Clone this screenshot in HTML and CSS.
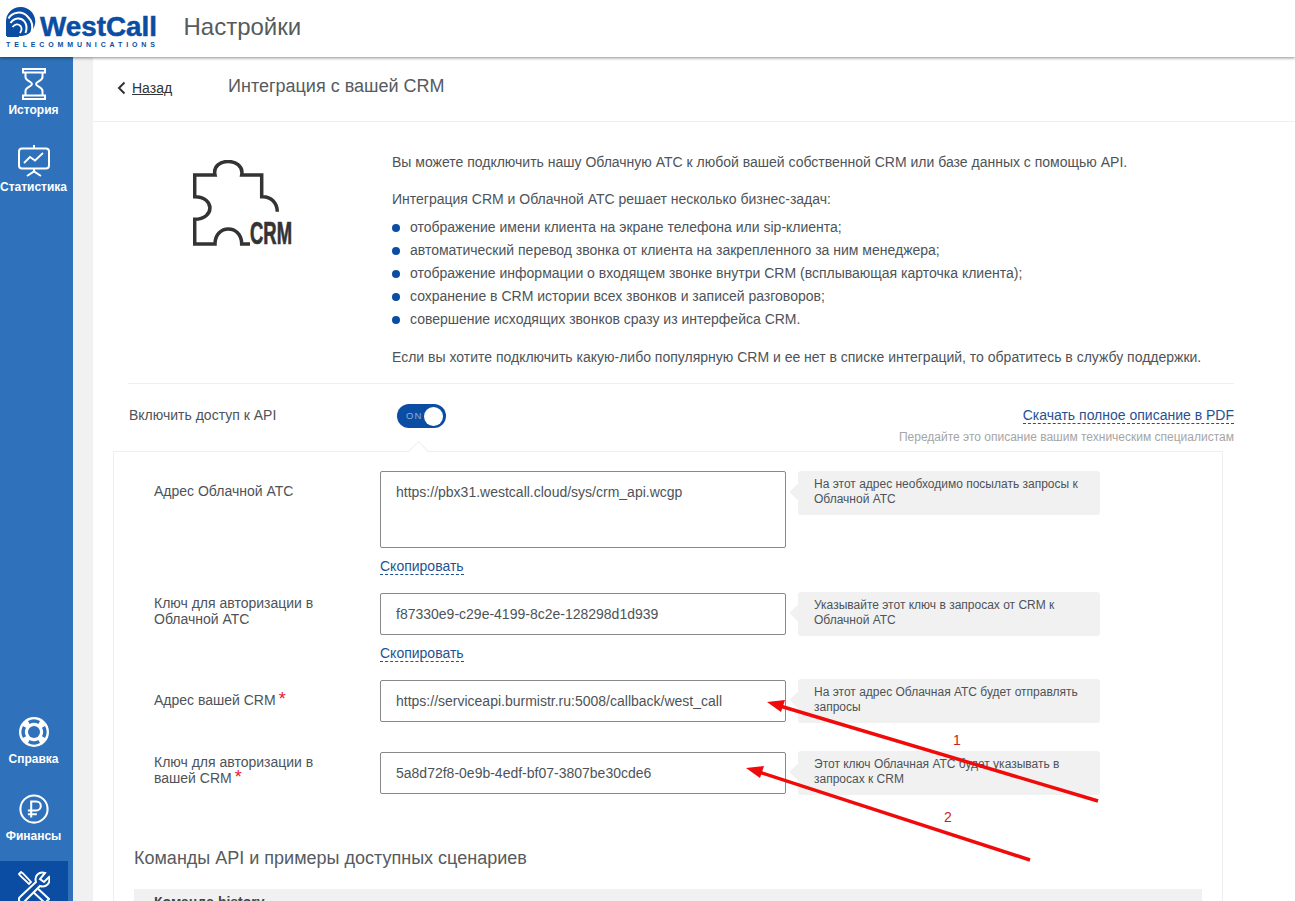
FILE: index.html
```html
<!DOCTYPE html>
<html lang="ru">
<head>
<meta charset="utf-8">
<title>Настройки</title>
<link rel="stylesheet" href="styles.css">
</head>
<body>
<div class="app">
  <header class="topbar">
    <div class="logo">
      <svg class="logo-mark" viewBox="0 0 30 31" width="30" height="31">
        <path d="M14.500 1A14.500 14.500 0 1 1 11 29.500L0 30V15A14.500 14.500 0 0 1 14.500 1Z" fill="#0a4da2"/>
        <path d="M2.500 12.500C6 6 16 4 22 11C26 15 27 21 25.500 26" fill="none" stroke="#fff" stroke-width="2"/>
        <path d="M4.500 17C8 11.500 15 11 18.500 15.500C21 19 21 23 19.500 27" fill="none" stroke="#fff" stroke-width="2"/>
        <path d="M6.500 21C9 18 12 17.500 14.500 20C16 22 15.500 25 14 27" fill="none" stroke="#fff" stroke-width="1.800"/>
        <path d="M1 28L6 24C7 26 9 27 12 27L13 31H1Z" fill="#0a4da2"/>
      </svg>
      <span class="logo-name">WestCall</span>
      <span class="logo-sub">TELECOMMUNICATIONS</span>
    </div>
    <h1 class="page-title">Настройки</h1>
  </header>

  <div class="body-row">
    <nav class="sidebar">
      <div class="nav-group">
        <a class="nav-item">
          <svg viewBox="0 0 24 32" width="24" height="32" class="nav-icon"><path d="M1 1H23V4.500H1ZM1 27.500H23V31H1Z" fill="none" stroke="#fff" stroke-width="2"/><path d="M3.500 5V9C3.500 13 10 13.500 10 16C10 18.500 3.500 19 3.500 23V27M20.500 5V9C20.500 13 14 13.500 14 16C14 18.500 20.500 19 20.500 23V27" stroke="#fff" stroke-width="2" fill="none"/></svg>
          <span>История</span>
        </a>
        <a class="nav-item">
          <svg viewBox="0 0 32 32" width="32" height="32" class="nav-icon"><rect x="1" y="3.500" width="30" height="20" rx="3" fill="none" stroke="#fff" stroke-width="2"/><path d="M16 0V3M16 24V27M9 31L16 26.500L23 31" fill="none" stroke="#fff" stroke-width="2"/><path d="M6 18L12 12L17 15.500L25 8" fill="none" stroke="#fff" stroke-width="1.800"/></svg>
          <span>Статистика</span>
        </a>
      </div>
      <div class="nav-group nav-group-bottom">
        <a class="nav-item">
          <svg viewBox="0 0 30 30" width="30" height="30" class="nav-icon"><circle cx="15" cy="15" r="15" fill="#fff"/><circle cx="15" cy="15" r="6" fill="#2f72bb"/><path d="M9.800 5.500A10.800 10.800 0 0 1 20.200 5.500M24.500 9.800A10.800 10.800 0 0 1 24.500 20.200M20.200 24.500A10.800 10.800 0 0 1 9.800 24.500M5.500 20.200A10.800 10.800 0 0 1 5.500 9.800" fill="none" stroke="#2f72bb" stroke-width="3.500"/></svg>
          <span>Справка</span>
        </a>
        <a class="nav-item">
          <svg viewBox="0 0 32 32" width="30" height="30" class="nav-icon"><circle cx="16" cy="16" r="14.500" fill="none" stroke="#fff" stroke-width="2.200"/><path d="M13 25V8H18.500A4.500 4.500 0 0 1 18.500 17.500H9.500M9.500 21.500H19" fill="none" stroke="#fff" stroke-width="2.200"/></svg>
          <span>Финансы</span>
        </a>
        <a class="nav-item nav-active">
          <svg viewBox="0 0 32 32" width="32" height="32" class="nav-icon"><path d="M1 3L3 1L5 2.500L13 11L11 13L2.500 5Z" fill="none" stroke="#fff" stroke-width="1.800"/><path d="M17 15L31 28L27 32L13 19" fill="none" stroke="#fff" stroke-width="2"/><path d="M27 2C21 0 16 5 18 11L2 26C0 28 1 30 2 31C3 32 5 32 7 30L22 15C28 17 33 12 31 6L26 11L22 8Z" fill="#0a4da2" stroke="#fff" stroke-width="2"/></svg>
          <span>Настройки</span>
        </a>
      </div>
    </nav>

    <main class="gutter">
      <div class="sheet">
        <div class="toolbar">
          <a class="back"><svg viewBox="0 0 9 14" width="9" height="14"><path d="M7.500 1.500L2 7L7.500 12.500" fill="none" stroke="#333" stroke-width="2"/></svg><span class="back-text">Назад</span></a>
          <h2 class="section-title">Интеграция с вашей CRM</h2>
        </div>

        <section class="intro">
          <div class="intro-icon">
            <svg viewBox="0 0 100 90" width="100" height="90">
              <path d="M57 84H48.700C48.700 64 22 64 22 84H1.700V59.300C22 59.300 22 36.700 1.700 36.700V15H22C18 -3 52 -3 48.700 15H68.700V36.700C78 36 84.300 43 84.300 51.700" fill="none" stroke="#333" stroke-width="3.500"/>
              <text class="crm-mark" x="57" y="84" textLength="42" lengthAdjust="spacingAndGlyphs">CRM</text>
            </svg>
          </div>
          <div class="intro-text">
            <p class="para">Вы можете подключить нашу Облачную АТС к любой вашей собственной CRM или базе данных с помощью API.</p>
            <p class="para para-lead">Интеграция CRM и Облачной АТС решает несколько бизнес-задач:</p>
            <ul class="tasks">
              <li>отображение имени клиента на экране телефона или sip-клиента;</li>
              <li>автоматический перевод звонка от клиента на закрепленного за ним менеджера;</li>
              <li>отображение информации о входящем звонке внутри CRM (всплывающая карточка клиента);</li>
              <li>сохранение в CRM истории всех звонков и записей разговоров;</li>
              <li>совершение исходящих звонков сразу из интерфейса CRM.</li>
            </ul>
            <p class="para para-last">Если вы хотите подключить какую-либо популярную CRM и ее нет в списке интеграций, то обратитесь в службу поддержки.</p>
          </div>
        </section>

        <section class="api-row">
          <span class="api-label">Включить доступ к API</span>
          <span class="toggle"><span class="toggle-text">ON</span><span class="toggle-knob"></span></span>
          <div class="api-doc">
            <a class="dashed">Скачать полное описание в PDF</a>
            <span class="api-note">Передайте это описание вашим техническим специалистам</span>
          </div>
        </section>

        <section class="panel">
          <span class="panel-notch"></span>
          <div class="field">
            <div class="field-label">Адрес Облачной АТС</div>
            <div class="field-main">
              <div class="box box-tall">https://pbx31.westcall.cloud/sys/crm_api.wcgp</div>
              <a class="dashed copy">Скопировать</a>
            </div>
            <div class="hint">На этот адрес необходимо посылать запросы к Облачной АТС</div>
          </div>
          <div class="field field-second">
            <div class="field-label">Ключ для авторизации в Облачной АТС</div>
            <div class="field-main">
              <div class="box">f87330e9-c29e-4199-8c2e-128298d1d939</div>
              <a class="dashed copy">Скопировать</a>
            </div>
            <div class="hint">Указывайте этот ключ в запросах от CRM к Облачной АТС</div>
          </div>
          <div class="field field-third">
            <div class="field-label">Адрес вашей CRM<span class="req">*</span></div>
            <div class="field-main">
              <div class="box">https://serviceapi.burmistr.ru:5008/callback/west_call</div>
            </div>
            <div class="hint">На этот адрес Облачная АТС будет отправлять запросы</div>
          </div>
          <div class="field field-fourth">
            <div class="field-label">Ключ для авторизации в вашей CRM<span class="req">*</span></div>
            <div class="field-main">
              <div class="box">5a8d72f8-0e9b-4edf-bf07-3807be30cde6</div>
            </div>
            <div class="hint">Этот ключ Облачная АТС будет указывать в запросах к CRM</div>
          </div>
          <h3 class="commands-title">Команды API и примеры доступных сценариев</h3>
          <div class="command"><b>Команда history</b></div>
        </section>
      </div>
    </main>
  </div>

  <svg class="arrows" viewBox="0 0 1295 901" width="1295" height="901">
    <path d="M1098 801L780 706" stroke="#f00a0a" stroke-width="3.500" fill="none"/>
    <path d="M767 702L785 700L781 712Z" fill="#f00a0a"/>
    <path d="M1030 860L759 772" stroke="#f00a0a" stroke-width="3.500" fill="none"/>
    <path d="M746 768L764 766L760 778Z" fill="#f00a0a"/>
    <text class="arrow-num" x="953" y="745">1</text>
    <text class="arrow-num" x="944" y="822">2</text>
  </svg>
</div>
</body>
</html>
```
FILE: styles.css
```css
* { box-sizing: border-box; }
html, body { margin: 0; padding: 0; height: 100%; }
body { font-family: "Liberation Sans", Arial, sans-serif; color: #4d5358; background: #fff; }
h1, h2, h3, p, ul { margin: 0; padding: 0; font-weight: 400; }
a { color: inherit; }

.app { position: relative; width: 1295px; height: 901px; overflow: hidden; display: flex; flex-direction: column; }

.topbar { position: relative; z-index: 2; flex: 0 0 57px; height: 57px; display: flex; align-items: center; background: #fff; box-shadow: 0 1px 3px rgba(0,0,0,.45); }
.logo { position: relative; width: 183.500px; height: 57px; flex: none; }
.logo-mark { position: absolute; left: 6px; top: 6px; }
.logo-name { position: absolute; left: 40px; top: 11px; font-size: 27.800px; line-height: 32px; font-weight: 700; color: #0a4da2; -webkit-text-stroke: .5px #0a4da2; }
.logo-sub { position: absolute; left: 6px; top: 41px; font-size: 7px; line-height: 8px; font-weight: 700; letter-spacing: 3.870px; color: #0a4da2; white-space: nowrap; }
.page-title { font-size: 24px; line-height: 30px; color: #555b60; margin-top: -3px; }

.body-row { flex: 1; display: flex; min-height: 0; }

.sidebar { flex: 0 0 73px; display: flex; flex-direction: column; justify-content: space-between; background: #2f72bb; padding-top: 4px; }
.nav-group { display: flex; flex-direction: column; }
.nav-group-bottom { height: 192px; }
.nav-item { display: flex; flex-direction: column; align-items: center; width: 67px; height: 77px; padding-top: 7px; color: #fff; font-size: 12px; line-height: 14px; font-weight: 700; white-space: nowrap; }
.nav-icon { flex: none; margin-bottom: 3px; }
.nav-group-bottom .nav-item { padding-top: 8px; }
.nav-group-bottom .nav-icon { margin-bottom: 5px; }
.nav-group-bottom .nav-active { width: 68px; height: 40px; margin-top: -2px; padding-top: 10px; background: #0a4da2; overflow: hidden; flex: none; }

.gutter { flex: 1; min-width: 0; padding-left: 20px; background: #f1f1f1; }
.sheet { height: 100%; background: #fff; }

.toolbar { height: 65px; display: flex; align-items: center; border-bottom: 1px solid #eee; padding-left: 25px; }
.back { display: flex; align-items: center; width: 110px; margin-top: -3px; font-size: 14px; color: #333; flex: none; }
.back svg { margin-right: 6px; margin-left: -1px; }
.back-text { text-decoration: underline; }
.section-title { font-size: 18px; line-height: 22px; color: #555b60; margin-top: -6px; }

.intro { display: flex; margin: 0 61px 0 35px; height: 262px; border-bottom: 1px solid #eee; }
.intro-icon { width: 264px; flex: none; padding: 38px 0 0 65px; }
.crm-mark { font-family: "Liberation Sans", Arial, sans-serif; font-weight: 700; font-size: 31px; fill: #333; stroke: #333; stroke-width: .7px; }
.intro-text { padding-top: 32px; font-size: 14px; line-height: 16px; }
.para { margin-bottom: 21px; }
.para-lead { margin-bottom: 13px; }
.tasks { list-style: none; margin-top: -1px; }
.tasks li { position: relative; height: 23px; line-height: 16px; padding-left: 18px; }
.tasks li::before { content: ""; position: absolute; left: 0; top: 5px; width: 8px; height: 8px; border-radius: 50%; background: #0a4da2; }
.para-last { margin: 15px 0 0; }

.api-row { display: flex; align-items: flex-start; height: 67px; margin: 0 61px 0 36px; padding-top: 20px; position: relative; }
.api-label { width: 268px; margin-top: 1px; font-size: 14px; line-height: 20px; flex: none; }
.toggle { position: relative; width: 49px; height: 24px; border-radius: 12px; background: #0a4da2; flex: none; }
.toggle-text { position: absolute; left: 9px; top: 7px; font-size: 9.500px; line-height: 10px; letter-spacing: 1px; color: #8fb0dc; }
.toggle-knob { position: absolute; right: 3px; top: 2.500px; width: 19px; height: 19px; border-radius: 50%; background: #fff; }
.api-doc { margin-left: auto; display: flex; flex-direction: column; align-items: flex-end; margin-top: 3px; }
.dashed { color: #1f5292; border-bottom: 1px dashed #1f5292; line-height: 16px; display: inline-block; }
.api-doc .dashed { font-size: 14px; }
.api-note { margin-top: 6px; font-size: 12px; line-height: 14px; color: #a5a5a5; }

.panel { position: relative; margin-left: 20px; width: 1110px; height: 500px; border: 1px solid #eee; border-bottom: 0; padding: 19px 20px 0 40px; }
.panel-notch { position: absolute; left: 297px; top: -8px; width: 15px; height: 15px; background: #fff; border-left: 1px solid #eee; border-top: 1px solid #eee; transform: rotate(45deg); }

.field { display: flex; align-items: flex-start; font-size: 14px; }
.field-label { width: 226px; flex: none; line-height: 16px; padding-top: 12px; color: #4d5358; padding-right: 50px; }
.field-main { width: 406px; flex: none; }
.box { height: 42px; border: 1px solid #888; border-radius: 2px; padding: 12px 15px 0; line-height: 16px; color: #4d5358; background: #fff; }
.box-tall { height: 77px; }
.copy { margin-top: 10px; font-size: 14px; }
.hint { position: relative; margin: 0 0 0 12px; width: 302px; height: 44px; padding: 6px 16px; background: #f1f1f1; border-radius: 3px; font-size: 12px; line-height: 15px; color: #4d5358; }
.hint::before { content: ""; position: absolute; left: -6px; top: 15px; width: 12px; height: 12px; background: #f1f1f1; transform: rotate(45deg); }
.field-second { margin-top: 18px; }
.field-second .field-label { padding-top: 2px; }
.field-second .hint, .field-third .hint, .field-fourth .hint { margin-top: -1px; }
.field-third { margin-top: 18px; }
.field-fourth { margin-top: 29px; }
.field-fourth .field-label { padding-top: 2px; }
.req { color: #e0222e; font-size: 18px; line-height: 14px; margin-left: 3px; }

.commands-title { margin: 52px 0 0 -20px; font-size: 18px; line-height: 22px; color: #555b60; }
.command { margin: 20px 0 0 -20px; height: 60px; width: 1068px; background: #f1f1f1; padding: 5px 20px; font-size: 14px; line-height: 16px; color: #444; }

.arrows { position: absolute; left: 0; top: 0; z-index: 3; pointer-events: none; }
.arrow-num { font-family: "Liberation Sans", Arial, sans-serif; font-size: 14px; fill: #c81e1e; }
```
